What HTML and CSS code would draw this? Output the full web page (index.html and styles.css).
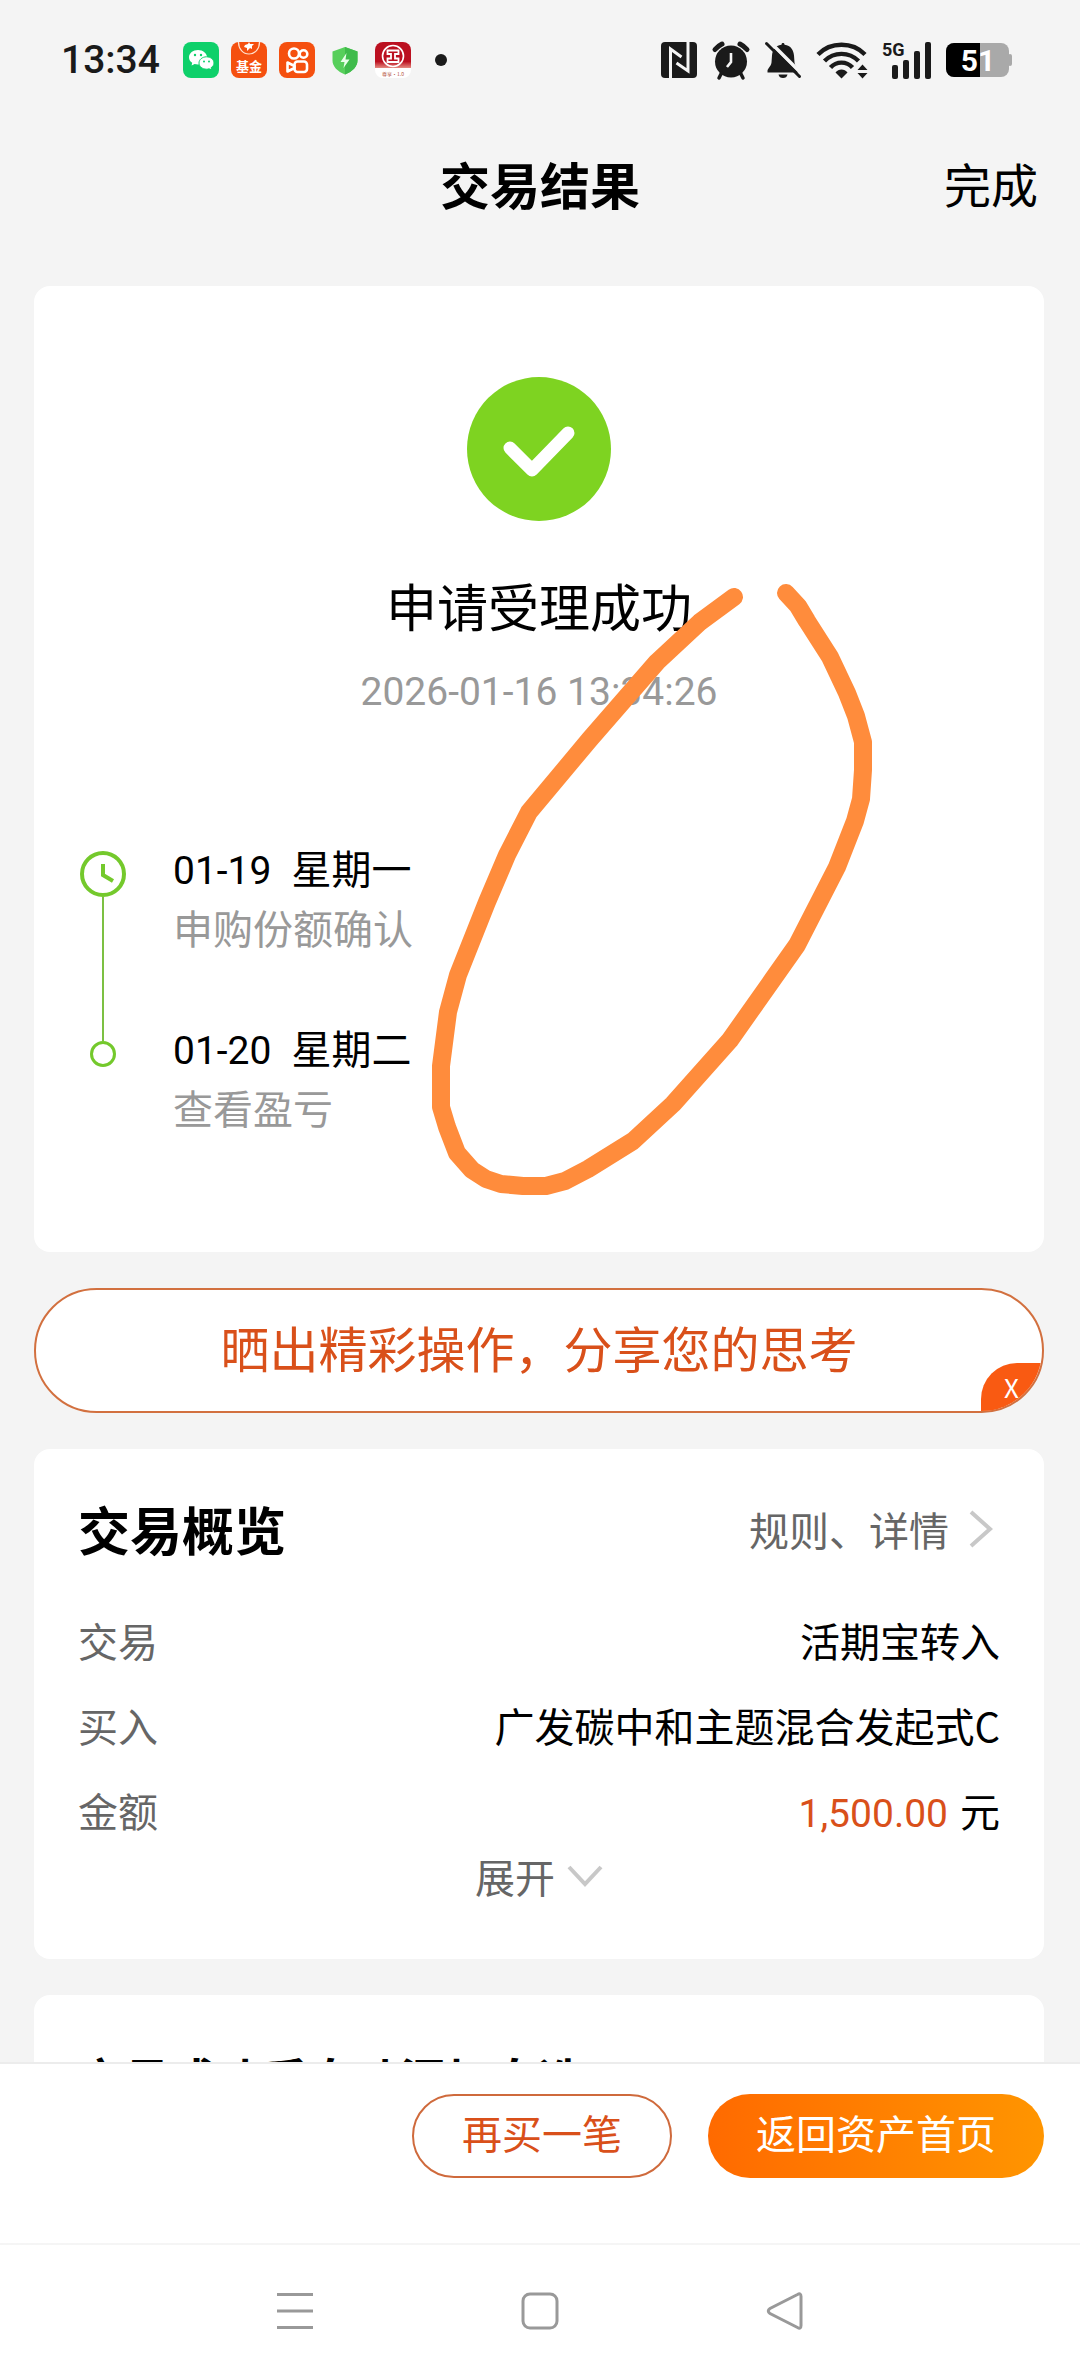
FILE: index.html
```html
<!DOCTYPE html>
<html lang="zh-CN">
<head>
<meta charset="utf-8">
<meta name="viewport" content="width=device-width, initial-scale=1">
<title>交易结果</title>
<link rel="stylesheet" href="styles.css">
</head>
<body>
<div class="app">
  <div class="status">
    <span class="status-time">13:34</span>
    <div class="status-apps">
      <svg class="app-icon" viewBox="0 0 36 36" aria-hidden="true">
        <rect width="36" height="36" rx="8" fill="#0ed06a"/>
        <path d="M15 8c-5 0-9 3.200-9 7.200 0 2.300 1.200 4.200 3.200 5.500l-.6 2.800 3-1.500c1.100.3 2.200.5 3.400.5 5 0 9-3.200 9-7.200S20 8 15 8z" fill="#fff"/>
        <path d="M23.500 14.800c-4.200 0-7.500 2.800-7.500 6.200s3.300 6.200 7.500 6.200c.9 0 1.800-.1 2.600-.4l2.500 1.300-.5-2.400c1.700-1.100 2.900-2.800 2.900-4.700 0-3.400-3.300-6.200-7.500-6.200z" fill="#fff" stroke="#0ed06a"/>
        <circle cx="12" cy="13" r="1.200" fill="#0ed06a"/><circle cx="18" cy="13" r="1.200" fill="#0ed06a"/>
        <circle cx="21" cy="19.500" r="1" fill="#0ed06a"/><circle cx="26" cy="19.500" r="1" fill="#0ed06a"/>
      </svg>
      <svg class="app-icon" viewBox="0 0 36 36" aria-hidden="true">
        <rect width="36" height="36" rx="8" fill="#f5500f"/>
        <path d="M7.500 0c0 7 4.500 12 10.500 12S28.500 7 28.500 0" fill="#f5500f" stroke="#ffe2cf" stroke-width="1.200"/>
        <path d="M14 3l3-1 1-2 1 2 4 0-2 2 0 3-2-1-3 3 0-3-3-1z" fill="#fff"/>
        <text class="fund-label" x="18" y="29">基金</text>
      </svg>
      <svg class="app-icon" viewBox="0 0 36 36" aria-hidden="true">
        <rect width="36" height="36" rx="8" fill="#f5500f"/>
        <g fill="none" stroke="#fff" stroke-width="2.600">
          <circle cx="15" cy="11.500" r="5"/><circle cx="24.500" cy="12" r="3.800"/>
          <rect x="15.500" y="19.500" width="12.500" height="10.500" rx="3"/>
          <path d="M8.500 20.500v9l7-3.500v-2z" stroke-linejoin="round"/>
        </g>
      </svg>
      <svg class="app-icon" viewBox="0 0 36 36" aria-hidden="true">
        <path d="M18 5l12.500 4.500v9c0 6-5 11-12.500 14C10.500 29.500 5.500 24.500 5.500 18.500v-9z" fill="#57cf5b"/>
        <path d="M18 5l12.500 4.500v9c0 6-5 11-12.500 14z" fill="#3fbb4b"/>
        <path d="M19.500 11l-6 9h4l-1 6 6-8.500h-4z" fill="#e9ffe9"/>
      </svg>
      <svg class="app-icon" viewBox="0 0 36 36" aria-hidden="true">
        <defs><linearGradient id="bank" x1="0" y1="0" x2="0" y2="1"><stop offset="0.750" stop-color="#bb1020"/><stop offset="1" stop-color="#e58a80"/></linearGradient></defs>
        <rect width="36" height="36" rx="8" fill="#fff"/>
        <path d="M0 26V8a8 8 0 0 1 8-8h20a8 8 0 0 1 8 8v18z" fill="url(#bank)"/>
        <circle cx="18" cy="14" r="10.500" fill="none" stroke="#fff" stroke-width="1.600"/>
        <path d="M12.500 12V8.500h11V12H20v4.500h3.500V20h-11v-3.500H16V12z" fill="none" stroke="#fff" stroke-width="1.800"/>
        <text class="bank-label" x="18" y="34">尊享·1.0</text>
      </svg>
      <span class="more-dot"></span>
    </div>
    <div class="status-system">
      <svg class="sys-icon" width="38" height="38" viewBox="0 0 38 38" aria-hidden="true">
        <rect x="1" y="1" width="36" height="36" rx="4" fill="#1a1a1a"/>
        <path d="M10.500 37V8l11 8M28 1v29l-11.500-8" fill="none" stroke="#f5f5f5" stroke-width="3"/>
      </svg>
      <svg class="sys-icon" width="38" height="38" viewBox="0 0 38 38" aria-hidden="true">
        <circle cx="19" cy="20.500" r="16" fill="#1a1a1a"/>
        <path d="M3 8.500A22 22 0 0 1 10 3M28 3a22 22 0 0 1 7 5.500" stroke="#1a1a1a" stroke-width="5" fill="none" stroke-linecap="round"/>
        <path d="M9.500 32l-2.500 5M28.500 32l2.500 5" stroke="#1a1a1a" stroke-width="3.500" stroke-linecap="round"/>
        <path d="M19 12v9l-4 5" fill="none" stroke="#f5f5f5" stroke-width="2.600"/>
      </svg>
      <svg class="sys-icon" width="38" height="38" viewBox="0 0 38 38" aria-hidden="true">
        <path d="M19 2c1 0 1.500.6 1.500 1.700C27 4.500 29.500 9 30 14.500l.5 7c.5 4 4 6 4 8.500v1.500h-31V30c0-2.500 3.500-4.500 4-8.500l.5-7c.5-5.500 3-10 9.500-10.800C17.500 2.600 18 2 19 2z" fill="#1a1a1a"/>
        <path d="M14.500 33.500h9c-.5 2.500-2 3.500-4.500 3.500s-4-1-4.500-3.500z" fill="#1a1a1a"/>
        <path d="M5 0l34 34" stroke="#f5f5f5" stroke-width="3.500"/>
        <path d="M5 9L0 4L5 0L12 7z" fill="#f5f5f5"/>
        <path d="M2.500 2.500L35.500 35.500" stroke="#1a1a1a" stroke-width="3" stroke-linecap="round"/>
      </svg>
      <svg class="sys-icon" width="52" height="38" viewBox="0 0 52 38" aria-hidden="true">
        <g fill="none" stroke="#1a1a1a" stroke-width="4.400">
          <path d="M2 13.500C14.500.500 36.500.500 49 13.500"/>
          <path d="M8.500 20c9.500-9.500 24.500-9.500 34 0"/>
          <path d="M14.500 26.500c6-6.500 16-6.500 22 0"/>
        </g>
        <path d="M25.500 37.500l-6-6c3-4 9-4 12 0z" fill="#1a1a1a"/>
        <path d="M46.500 23.500l5 5.500h-10zM46.500 37.500l5-5.500h-10z" fill="#1a1a1a"/>
      </svg>
      <svg class="sys-icon" width="50" height="38" viewBox="0 0 50 38" aria-hidden="true">
        <text class="net-label" x="0" y="15">5G</text>
        <g fill="#1a1a1a"><rect x="10" y="24" width="6" height="14" rx="2"/><rect x="21" y="19" width="6" height="19" rx="2"/><rect x="32" y="10" width="6" height="28" rx="2"/><rect x="43" y="1" width="6" height="37" rx="2"/></g>
      </svg>
      <svg class="sys-icon" width="66" height="34" viewBox="0 0 66 34" aria-hidden="true">
        <rect width="63" height="34" rx="8" fill="#a9a9a9"/><rect x="62" y="11" width="4" height="12" rx="2" fill="#a9a9a9"/>
        <path d="M34 0H8a8 8 0 0 0-8 8v18a8 8 0 0 0 8 8h26z" fill="#000"/>
        <text class="battery-label" x="32" y="28">51</text>
      </svg>
    </div>
  </div>

  <header class="titlebar">
    <h1 class="page-title">交易结果</h1>
    <button class="done" type="button">完成</button>
  </header>

  <main class="content">
    <section class="card result">
      <svg class="success" viewBox="0 0 144 144" aria-hidden="true">
        <circle cx="72" cy="72" r="72" fill="#7ed321"/>
        <path d="M43 71l22 22 36-37" fill="none" stroke="#fff" stroke-width="13" stroke-linecap="round" stroke-linejoin="round"/>
      </svg>
      <h2 class="result-title">申请受理成功</h2>
      <time class="result-time">2026-01-16 13:34:26</time>
      <ol class="timeline">
        <li class="step">
          <span class="rail">
            <svg class="clock" viewBox="0 0 46 46" aria-hidden="true"><circle cx="23" cy="23" r="21" fill="none" stroke="#74c92c" stroke-width="4"/><path d="M23 13v11l10 6" fill="none" stroke="#74c92c" stroke-width="4"/></svg>
            <span class="rail-line"></span>
          </span>
          <div class="step-text"><div class="step-date"><span class="num">01-19</span><span>星期一</span></div><div class="step-desc">申购份额确认</div></div>
        </li>
        <li class="step">
          <span class="rail"><span class="node"></span></span>
          <div class="step-text"><div class="step-date"><span class="num">01-20</span><span>星期二</span></div><div class="step-desc">查看盈亏</div></div>
        </li>
      </ol>
      <svg class="scribble" viewBox="0 0 450 620" aria-hidden="true">
        <path d="M304 17L270 42L227 82L160 159L99 232L77 275L57 322L28 395L18 432L11 486V527L17 547L27 573L42 590L56 599L71 604L93 606H116L135 601L158 589L203 561L243 524L300 460L343 399L367 365L407 287L425 241L431 219L433 190V162L426 136L417 113L400 77L377 41L368 26L356 13"/>
      </svg>
    </section>

    <div class="share">
      <a class="share-link" href="#share">晒出精彩操作，分享您的思考</a>
      <button class="share-close" type="button" aria-label="关闭">X</button>
    </div>

    <section class="card overview">
      <div class="overview-head">
        <h2 class="overview-title">交易概览</h2>
        <a class="detail-link" href="#detail">规则、详情
          <svg class="chev-right" viewBox="0 0 24 38" aria-hidden="true"><path d="M2 2l19 17L2 36"/></svg>
        </a>
      </div>
      <dl class="rows">
        <div class="row"><dt>交易</dt><dd>活期宝转入</dd></div>
        <div class="row"><dt>买入</dt><dd>广发碳中和主题混合发起式C</dd></div>
        <div class="row"><dt>金额</dt><dd class="money"><span class="num amount">1,500.00</span><span>元</span></dd></div>
      </dl>
      <button class="expand" type="button">展开
        <svg class="chev-down" viewBox="0 0 36 22" aria-hidden="true"><path d="M2 2l16 17L34 2"/></svg>
      </button>
    </section>

    <section class="card extra"><h2 class="extra-title">交易成功后自动添加自选</h2></section>
  </main>

  <footer class="actions">
    <button class="btn btn-outline" type="button">再买一笔</button>
    <button class="btn btn-solid" type="button">返回资产首页</button>
  </footer>

  <nav class="sysnav" aria-label="系统导航">
    <button class="nav-btn" type="button" aria-label="最近任务"><svg viewBox="0 0 40 40"><path d="M2 3.500h36M2 20h36M2 36.500h36"/></svg></button>
    <button class="nav-btn" type="button" aria-label="主屏幕"><svg viewBox="0 0 40 40"><rect x="3" y="3" width="34" height="34" rx="7"/></svg></button>
    <button class="nav-btn" type="button" aria-label="返回"><svg viewBox="0 0 40 40"><path d="M32.500 3.500Q36 1.500 36 5.500V34.500Q36 38.500 32.500 36.500L5 22.500Q1.500 20 5 17.500Z"/></svg></button>
  </nav>
</div>
</body>
</html>
```
FILE: styles.css
```css
* { box-sizing: border-box; }

body {
  margin: 0;
  background: #f4f4f4;
  color: #000;
  font-family: "Noto Sans CJK SC", "Noto Sans", sans-serif;
  font-size: 40px;
  line-height: 60px;
}

h1, h2, dl, dd, ol { margin: 0; padding: 0; }
button { margin: 0; padding: 0; border: 0; background: none; color: inherit; font: inherit; cursor: pointer; }
a { color: inherit; text-decoration: none; }
svg { display: block; }
.num { font: 39px/40px Roboto, sans-serif; }

.app { display: flex; flex-direction: column; height: 100vh; overflow: hidden; }

/* Status bar */
.status { display: flex; align-items: center; height: 120px; padding: 0 68px 0 61px; color: #1a1a1a; }
.status-time { font: 500 39px/48px Roboto, sans-serif; }
.status-apps { display: flex; align-items: center; gap: 12px; margin-left: 23px; }
.app-icon { width: 36px; height: 36px; }
.more-dot { width: 12px; height: 12px; margin-left: 12px; border-radius: 50%; background: #1a1a1a; }
.fund-label { fill: #fff; font-size: 13px; font-weight: 700; text-anchor: middle; }
.bank-label { fill: #b5523c; font-size: 5px; text-anchor: middle; }
.status-system { display: flex; align-items: center; gap: 14px; margin-left: auto; }
.sys-icon { flex: none; overflow: visible; }
.net-label { fill: #1a1a1a; font: 700 18px Roboto, sans-serif; }
.battery-label { fill: #fff; font: 700 30px Roboto, sans-serif; text-anchor: middle; }

/* Title bar */
.titlebar { display: grid; grid-template-columns: 1fr auto 1fr; align-items: center; height: 132px; padding: 0 42px 6px; }
.page-title { grid-column: 2; font-size: 50px; font-weight: 700; }
.done { justify-self: end; font-size: 47px; }

.content { flex: 1; min-height: 0; overflow: hidden; display: flex; flex-direction: column; gap: 36px; padding: 34px 36px 0 34px; }
.card { flex: none; border-radius: 16px; background: #fff; }

.result { position: relative; display: flex; flex-direction: column; align-items: center; padding: 91px 44px 115px; }
.success { width: 144px; height: 144px; }
.result-title { margin-top: 54px; font-size: 51px; font-weight: 400; }
.result-time { margin-top: 27px; color: #999; font: 39px/60px Roboto, sans-serif; }
.timeline { width: 100%; margin-top: 115px; list-style: none; }
.step { display: flex; gap: 45px; }
.rail { display: flex; flex-direction: column; align-items: center; width: 50px; padding-top: 14px; }
.clock { width: 46px; height: 46px; }
.rail-line { flex: 1; width: 2px; margin-bottom: -24px; background: #7cc043; }
.node { width: 26px; height: 26px; border: 3px solid #74c92c; border-radius: 50%; }
.step + .step .rail { padding-top: 24px; }
.step-text { padding-bottom: 60px; }
.step:last-child .step-text { padding-bottom: 0; }
.step-date { display: flex; align-items: baseline; gap: 20px; }
.step-desc { color: #999; }

/* Freehand mark drawn over the card */
.scribble { position: absolute; left: 396px; top: 294px; width: 450px; height: 620px; pointer-events: none; }
.scribble path { fill: none; stroke: #ff8c3c; stroke-width: 18px; stroke-linecap: round; stroke-linejoin: round; }

/* Share pill */
.share { position: relative; flex: none; height: 125px; border: 2px solid #d2703f; border-radius: 63px; background: #fff; overflow: hidden; color: #d9501a; }
.share-link { display: flex; align-items: center; justify-content: center; height: 100%; padding-bottom: 8px; font-size: 49px; }
.share-close { position: absolute; right: 0; bottom: 0; width: 61px; height: 48px; border-top-left-radius: 36px; background: #f95a12; color: #fff; font-size: 26px; line-height: 48px; }

/* Overview */
.overview { padding: 50px 44px 53px; }
.overview-head { display: flex; justify-content: space-between; align-items: center; }
.overview-title { font-size: 52px; font-weight: 700; }
.detail-link { display: flex; align-items: center; gap: 20px; padding-right: 7px; color: #666; }
.chev-right { width: 24px; height: 38px; }
.chev-down { width: 36px; height: 22px; }
.chev-right path, .chev-down path { fill: none; stroke: #c8c8c8; stroke-width: 4px; }
.rows { display: flex; flex-direction: column; gap: 25px; margin-top: 51px; }
.row { display: flex; justify-content: space-between; }
.row dt { color: #666; }
.money { display: flex; align-items: baseline; gap: 12px; }
.amount { color: #d9501a; }
.expand { display: flex; align-items: center; gap: 12px; margin: 6px auto 0; color: #666; }

.extra { padding: 52px 44px; }
.extra-title { font-size: 46px; font-weight: 700; }

/* Bottom bar */
.actions { display: flex; justify-content: flex-end; gap: 36px; height: 181px; padding: 30px 36px 0; border-top: 2px solid #ececec; background: #fff; }
.btn { height: 84px; padding: 0 48px 8px; border-radius: 42px; }
.btn-outline { border: 2px solid #cf6a3c; color: #d9501a; }
.btn-solid { background: linear-gradient(90deg, #ff6a00, #ff9500); color: #fff; }

.sysnav { display: flex; justify-content: center; gap: 205px; height: 133px; padding-top: 46px; border-top: 2px solid #f5f5f5; background: #fff; }
.nav-btn { width: 40px; height: 40px; }
.nav-btn svg { width: 40px; height: 40px; fill: none; stroke: #999; stroke-width: 3px; }
```
